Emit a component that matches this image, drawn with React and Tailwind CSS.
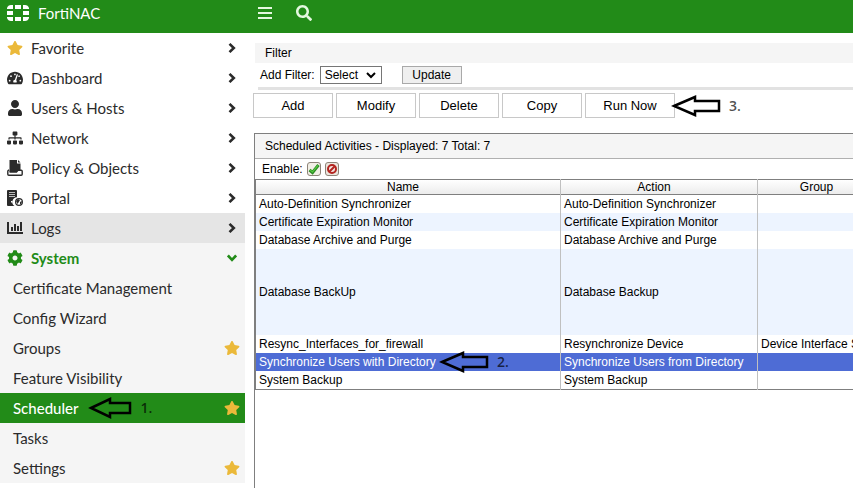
import { useState } from "react";
import clsx from "clsx";
import {
  FaStar,
  FaTachometerAlt,
  FaUser,
  FaSitemap,
  FaCog,
  FaSearch,
} from "react-icons/fa";

function FortinetLogo() {
  return (
    <svg width="22" height="16" viewBox="0 0 22 16" fill="currentColor" aria-hidden="true">
      <path d="M4 0H6V4H0V3Q1 0 4 0Z" />
      <rect x="8" y="0" width="6" height="4" />
      <path d="M16 0H18Q21 0 22 3V4H16Z" />
      <rect x="0" y="6" width="6" height="4" />
      <rect x="16" y="6" width="6" height="4" />
      <path d="M0 12H6V16H4Q1 16 0 13Z" />
      <rect x="8" y="12" width="6" height="4" />
      <path d="M16 12H22V13Q21 16 18 16H16Z" />
    </svg>
  );
}

function MenuIcon() {
  return (
    <svg width="14" height="13" viewBox="0 0 14 13" fill="currentColor" aria-hidden="true">
      <rect y="0" width="14" height="2" />
      <rect y="5" width="14" height="2" />
      <rect y="10" width="14" height="2" />
    </svg>
  );
}

function PolicyIcon() {
  return (
    <svg width="16" height="16" viewBox="0 0 16 16" aria-hidden="true">
      <path d="M2.5 0H10V3.5H13.5V10.5H11L9.5 12H2.5Z" fill="currentColor" />
      <path d="M11 0L13.5 2.5H11Z" fill="currentColor" />
      <path
        d="M2 9.7L0.8 11V14.2Q0.8 15.2 1.8 15.2H14.2Q15.2 15.2 15.2 14.2V11.2Q15.2 10.2 14.2 10.2H11L9.5 12H2.5"
        fill="none"
        stroke="currentColor"
        strokeWidth="1.4"
      />
    </svg>
  );
}

function PortalIcon() {
  return (
    <svg width="16" height="16" viewBox="0 0 16 16" aria-hidden="true">
      <path d="M1 0H9Q10 0 10 1V7.2A4.8 4.8 0 0 0 7.5 16H1Q0 16 0 15V1Q0 0 1 0Z" fill="currentColor" />
      <path d="M2 2.5H8M2 4.5H8M2 6.5H8" stroke="#bbb" strokeWidth="1" />
      <rect x="4" y="11" width="1.5" height="1.5" fill="#fff" />
      <circle cx="12" cy="12" r="3.4" fill="#fff" stroke="currentColor" strokeWidth="1.2" />
      <path d="M9 11L11 9L13 10L11.5 12.5L10.5 14ZM13 12L15 11L14.5 13.5L13 14.5Z" fill="currentColor" />
    </svg>
  );
}

function LogsIcon() {
  return (
    <svg width="16" height="16" viewBox="0 0 16 16" fill="currentColor" aria-hidden="true">
      <path d="M0 2H2V12H16V14H0Z" />
      <rect x="4" y="7" width="2" height="4" />
      <rect x="7" y="4" width="2" height="7" />
      <rect x="10" y="6" width="2" height="5" />
      <rect x="13" y="2" width="2" height="9" />
    </svg>
  );
}

function Chevron({ open }) {
  return (
    <svg
      className={clsx("ml-auto", open && "rotate-90")}
      width="10"
      height="10"
      viewBox="0 0 10 10"
      fill="none"
      stroke="currentColor"
      strokeWidth="2.6"
      aria-hidden="true"
    >
      <path d="M2.5 0.9L6.8 5L2.5 9.1" />
    </svg>
  );
}

function Arrow({ short }) {
  return (
    <svg
      className="shrink-0"
      width={short ? 44 : 50}
      height="22"
      viewBox={short ? "0 0 44 22" : "0 0 50 22"}
      fill="none"
      stroke="#000"
      strokeWidth="2.5"
      aria-hidden="true"
    >
      <path d={short ? "M3 11L22 2V6H42V16H22V20Z" : "M3 11L24 2V6H48V16H24V20Z"} />
    </svg>
  );
}

function Step({ children }) {
  return (
    <span className="font-['Open_Sans',sans-serif] text-sm font-semibold text-black/70">
      {children}
    </span>
  );
}

const menu = [
  { label: "Favorite", icon: <FaStar size={16} className="text-[#ebb93a]" /> },
  { label: "Dashboard", icon: <FaTachometerAlt size={16} /> },
  { label: "Users & Hosts", icon: <FaUser size={16} /> },
  { label: "Network", icon: <FaSitemap size={16} /> },
  { label: "Policy & Objects", icon: <PolicyIcon /> },
  { label: "Portal", icon: <PortalIcon /> },
  { label: "Logs", icon: <LogsIcon />, hover: true },
];

const systemMenu = [
  { label: "Certificate Management" },
  { label: "Config Wizard" },
  { label: "Groups", star: true },
  { label: "Feature Visibility" },
  { label: "Scheduler", star: true, step: "1." },
  { label: "Tasks" },
  { label: "Settings", star: true },
];

const activities = [
  { name: "Auto-Definition Synchronizer", action: "Auto-Definition Synchronizer" },
  { name: "Certificate Expiration Monitor", action: "Certificate Expiration Monitor" },
  { name: "Database Archive and Purge", action: "Database Archive and Purge" },
  { name: "Database BackUp", action: "Database Backup", tall: true },
  {
    name: "Resync_Interfaces_for_firewall",
    action: "Resynchronize Device",
    group: "Device Interface Status",
  },
  {
    name: "Synchronize Users with Directory",
    action: "Synchronize Users from Directory",
    step: "2.",
  },
  { name: "System Backup", action: "System Backup" },
];

function Sidebar() {
  const [page, setPage] = useState("Scheduler");

  return (
    <nav className="w-[245px] shrink-0 text-[15px] text-[#2b2b2b]">
      {menu.map((item) => (
        <button
          key={item.label}
          className={clsx(
            "flex h-[30px] w-full items-center gap-2 pr-2 pl-[7px] text-left",
            item.hover && "bg-[#e5e5e5]"
          )}
        >
          {item.icon}
          {item.label}
          <Chevron />
        </button>
      ))}

      <div className="bg-[#f5f5f5]">
        <button className="flex h-[30px] w-full items-center gap-2 pr-2 pl-[7px] text-left font-bold text-[#228b18]">
          <FaCog size={16} />
          System
          <Chevron open />
        </button>
        {systemMenu.map((item) => (
          <a
            key={item.label}
            href="#"
            onClick={() => setPage(item.label)}
            className={clsx(
              "flex h-[30px] items-center pr-[5px] pl-[13px]",
              page === item.label && "bg-[#228b18] font-medium text-white"
            )}
          >
            {item.label}
            {item.step && (
              <span className="ml-2.5 flex items-center gap-2">
                <Arrow short />
                <Step>{item.step}</Step>
              </span>
            )}
            {item.star && <FaStar size={16} className="ml-auto text-[#ebb93a]" />}
          </a>
        ))}
      </div>
    </nav>
  );
}

function FilterPanel() {
  return (
    <section>
      <h2 className="ml-2.5 h-5 bg-[#f5f5f5] pl-2.5 text-[12px] leading-5">Filter</h2>
      <div className="flex h-6 items-center pl-[15px] text-[12px]">
        <label htmlFor="filter">Add Filter:</label>
        <span className="relative ml-[5px] flex">
          <select
            id="filter"
            className="h-[18px] w-[62px] appearance-none border border-[#767676] bg-white pl-1 text-[12px] leading-4"
          >
            <option>Select</option>
          </select>
          <svg
            className="pointer-events-none absolute top-1.5 right-1.5"
            width="10"
            height="7"
            viewBox="0 0 10 7"
            fill="none"
            stroke="#000"
            strokeWidth="2"
            aria-hidden="true"
          >
            <path d="M1 1L5 5L9 1" />
          </svg>
        </span>
        <button className="ml-5 h-[18px] w-[60px] border border-[#a9a9a9] bg-[#efefef] leading-4">
          Update
        </button>
      </div>
      <div className="ml-[13px] h-[3px] bg-[#e2e2e2]" />
    </section>
  );
}

function Toolbar() {
  return (
    <div className="mt-[3px] flex h-[25px] items-center pl-2 text-[13px]">
      <div className="flex gap-[3px]">
        {["Add", "Modify", "Delete", "Copy"].map((label) => (
          <button key={label} className="h-[25px] w-20 border border-[#c8c8c8] bg-white">
            {label}
          </button>
        ))}
        <button className="h-[25px] w-[90px] border border-[#c8c8c8] bg-white">Run Now</button>
      </div>
      <div className="z-10 -ml-1 flex items-center gap-2">
        <Arrow />
        <Step>3.</Step>
      </div>
    </div>
  );
}

function ActivityTable() {
  const [selected, setSelected] = useState("Synchronize Users with Directory");

  return (
    <section className="mt-[15px] ml-[9px] min-h-[355px] overflow-hidden border-t border-l border-[#7f7f7f]">
      <h2 className="h-[25px] border-b border-[#b0b0b0] bg-[#f5f5f5] pl-2.5 text-[12px] leading-6">
        Scheduled Activities - Displayed: 7 Total: 7
      </h2>
      <div className="flex h-5 items-center gap-1 pl-[7px] text-[12px]">
        Enable:
        <button
          aria-label="Enable"
          className="flex size-3.5 items-center justify-center rounded-[3px] border border-[#8d8378] bg-[#f2efe6]"
        >
          <svg width="12" height="12" viewBox="0 0 12 12" fill="none" aria-hidden="true">
            <path d="M1.5 7L4.5 9.5L10.5 2" stroke="#2c8a24" strokeWidth="3" />
            <path d="M2 7L4.5 9L10 2.3" stroke="#55c83f" strokeWidth="1.2" />
          </svg>
        </button>
        <button
          aria-label="Disable"
          className="flex size-3.5 items-center justify-center rounded-[3px] border border-[#8d8378] bg-[#ece6de]"
        >
          <svg width="12" height="12" viewBox="0 0 12 12" fill="none" aria-hidden="true">
            <circle cx="6" cy="6" r="4" fill="#f3e4e0" stroke="#b3241f" strokeWidth="2" />
            <path d="M3 9L9 3" stroke="#b3241f" strokeWidth="2" />
          </svg>
        </button>
      </div>

      <table className="w-[630px] table-fixed border-collapse border-y border-l border-[#7f7f7f] text-left text-[12px] leading-[18px]">
        <colgroup>
          <col className="w-[305px]" />
          <col className="w-[197px]" />
          <col />
        </colgroup>
        <thead>
          <tr className="h-[15px] border-b border-[#7f7f7f] bg-linear-to-b from-white to-[#ececec] text-center leading-[14px]">
            <th className="py-0 pr-2.5 pl-0 font-normal">Name</th>
            <th className="border-l border-[#c0c0c0] py-0 pr-2.5 pl-0 font-normal">Action</th>
            <th className="border-l border-[#c0c0c0] py-0 pr-2.5 pl-0 font-normal">Group</th>
          </tr>
        </thead>
        <tbody>
          {activities.map((row) => (
            <tr
              key={row.name}
              onClick={() => setSelected(row.name)}
              className={clsx(
                row.tall ? "h-[86px]" : "h-[18px]",
                selected === row.name
                  ? "bg-[#4e6cd5] text-white"
                  : "odd:bg-white even:bg-[#edf4ff]"
              )}
            >
              <td className="relative px-[3px] py-0">
                {row.name}
                {row.step && (
                  <span className="absolute inset-y-0 left-[183px] flex items-center gap-2">
                    <Arrow />
                    <Step>{row.step}</Step>
                  </span>
                )}
              </td>
              <td className="border-l border-[#c0c0c0] px-[3px] py-0">{row.action}</td>
              <td className="overflow-hidden border-l border-[#c0c0c0] px-[3px] py-0 whitespace-nowrap">
                {row.group}
              </td>
            </tr>
          ))}
        </tbody>
      </table>
    </section>
  );
}

function App() {
  return (
    <div className="min-h-screen overflow-hidden bg-white font-['Lato',sans-serif]">
      <header className="flex h-[33px] items-start bg-[#228b18] text-white">
        <div className="flex h-[26px] w-[245px] items-center gap-[9px] pl-[7px] text-[15px]">
          <FortinetLogo />
          FortiNAC
        </div>
        <div className="flex h-[26px] items-center gap-6 pl-[13px] text-[#e4f8df]">
          <button aria-label="Menu">
            <MenuIcon />
          </button>
          <button aria-label="Search">
            <FaSearch size={16} />
          </button>
        </div>
      </header>

      <div className="flex">
        <Sidebar />
        <main className="min-w-0 flex-1 pt-2.5 font-['Liberation_Sans',Arial,sans-serif] text-black">
          <FilterPanel />
          <Toolbar />
          <ActivityTable />
        </main>
      </div>
    </div>
  );
}

export default App;
